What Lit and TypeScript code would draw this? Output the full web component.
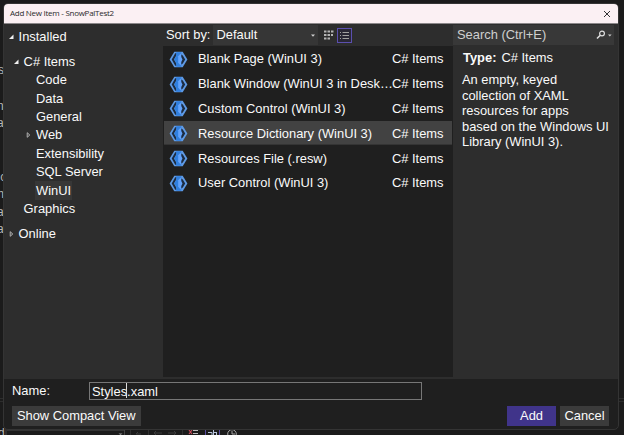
import { LitElement, html, css, svg, nothing } from "lit";
import { customElement, property } from "lit/decorators.js";
import { classMap } from "lit/directives/class-map.js";

interface TreeNode {
  label: string;
  level: number;
  arrow?: "open" | "closed";
  selected?: boolean;
  spaced?: boolean;
}

const TREE: TreeNode[] = [
  { label: "Installed", level: 0, arrow: "open" },
  { label: "C# Items", level: 1, arrow: "open", spaced: true },
  { label: "Code", level: 2 },
  { label: "Data", level: 2 },
  { label: "General", level: 2 },
  { label: "Web", level: 2, arrow: "closed" },
  { label: "Extensibility", level: 2 },
  { label: "SQL Server", level: 2 },
  { label: "WinUI", level: 2, selected: true },
  { label: "Graphics", level: 1 },
  { label: "Online", level: 0, arrow: "closed", spaced: true },
];

const TEMPLATES = [
  "Blank Page (WinUI 3)",
  "Blank Window (WinUI 3 in Desk…",
  "Custom Control (WinUI 3)",
  "Resource Dictionary (WinUI 3)",
  "Resources File (.resw)",
  "User Control (WinUI 3)",
];

@customElement("item-tree")
class ItemTree extends LitElement {
  static styles = css`
    :host { display: block; padding-top: 3.4px; }
    .node { display: flex; align-items: center; height: 18.35px; }
    .spaced { margin-top: 7.2px; }
    .level0 { padding-left: 4px; }
    .level1 { padding-left: 9px; }
    .level2 { padding-left: 21.4px; }
    .arrow { width: 7px; height: 8px; margin-right: 3.6px; flex: none; }
    .label { line-height: 18px; }
    .selected .label { background: #373737; box-shadow: 0 0 0 1px #373737; height: 17px; line-height: 18px; }
  `;

  render() {
    return TREE.map(
      (n) => html`<div class=${classMap({ node: true, [`level${n.level}`]: true, spaced: !!n.spaced, selected: !!n.selected })}>
        <svg class="arrow" viewBox="0 0 7 8">
          ${n.arrow === "open"
            ? svg`<path d="M5.500 1.500V6H1z" fill="#f0f0f0"/>`
            : n.arrow === "closed"
              ? svg`<path d="M2.200 1.700L4.800 4L2.200 6.300z" fill="#444" stroke="#b8b8b8" stroke-width=".9"/>`
              : nothing}
        </svg>
        <span class="label">${n.label}</span>
      </div>`
    );
  }
}

@customElement("template-row")
class TemplateRow extends LitElement {
  @property() name = "";

  static styles = css`
    :host { display: flex; align-items: center; height: 24.8px; padding: 0 8.5px 0 5px; }
    :host([selected]) { background: linear-gradient(#424242, #424242) 0 0 / 100% 23.6px no-repeat; }
    .icon { width: 19px; height: 17px; margin-right: 10px; flex: none; }
    .name { flex: 1; min-width: 0; white-space: nowrap; }
    .kind { white-space: nowrap; }
  `;

  render() {
    return html`
      <svg class="icon" viewBox="0 0 19 17">
        <path d="M5.300.700h8.400l4.700 7.800-4.700 7.800H5.300L.6 8.500z" fill="#5f9ae4"/>
        <path d="M6.200 2.200h1.600L7 5 5 8.500 7 12l.8 2.800H6.200L2.700 8.500z" fill="#1c2c42"/>
        <path d="M7.200 1.200h5v14.600h-5V12L5.200 8.500l2-3.500z" fill="#2f7fdf"/>
        <path d="M11.600 2.500l1.600 6-1.600 6-2.400-2.800V5.300z" fill="#62a2fb"/>
        <path d="M12.300 3.600l1.500.8 2.400 4.100-2.400 4.100-1.500.8v-2.500l1.200-2.400-1.200-2.400z" fill="#1c2c42"/>
      </svg>
      <span class="name">${this.name}</span>
      <span class="kind">C# Items</span>
    `;
  }
}

@customElement("app-root")
class AppRoot extends LitElement {
  static styles = css`
    :host {
      display: block; position: relative; width: 624px; height: 435px; overflow: hidden;
      background: #1b1b1b; color: #fafafa;
      font: 12.9px/18px "Liberation Sans", Arial, sans-serif;
    }
    .behind { position: absolute; color: #b8b8b8; white-space: nowrap; font-size: 12px; }
    .b1 { left: -2px; top: 61px; }
    .b2 { left: -3px; top: 97px; }
    .b3 { left: -3px; top: 114px; }
    .b4 { left: -3px; top: 168px; }
    .b5 { left: -6px; top: 185px; }
    .b6 { left: -9px; top: 203px; }
    .b7 { left: -9px; top: 220px; }
    .b8 { left: -2px; top: 424px; }
    .seam { position: absolute; left: 0; right: 0; top: 398px; height: 4px; border: solid #2d2d2d; border-width: 1px 0; box-sizing: border-box; }
    .toolbar { position: absolute; left: 0; top: 428px; width: 300px; height: 7px; }
    .dialog {
      position: absolute; left: 3px; top: 3px; width: 616px; height: 427px; box-sizing: border-box;
      border: 1px solid #343434; border-radius: 5px; overflow: hidden; background: #1f1f1f;
      display: flex; flex-direction: column;
    }
    .title {
      flex: none; height: 20px; box-sizing: border-box; background: #fbf0f3; color: #2a2a2a;
      border-bottom: 1px solid #8b8789; display: flex; align-items: center;
      justify-content: space-between; padding: 0 7px 0 6px;
      font: 8px/18px "Open Sans", "Noto Sans", sans-serif; letter-spacing: -.27px;
    }
    .title span { padding-bottom: 1px; }
    .close { width: 8px; height: 8px; }
    .body { flex: none; height: 355px; display: grid; grid-template-columns: 159px 290px 1fr; background: #2d2d2d; }
    .middle { display: flex; flex-direction: column; }
    .sort { height: 22px; display: flex; align-items: center; padding-left: 3px; box-sizing: border-box; }
    .combo { margin-left: 3px; width: 105px; height: 20px; background: #363636; display: flex; align-items: center; justify-content: space-between; padding: 0 3px 0 3px; box-sizing: border-box; }
    .caret { width: 4px; height: 3px; }
    .grid { width: 10px; height: 10px; margin-left: 6px; }
    .lines { width: 15px; height: 15px; margin-left: 3px; }
    .list { flex: 1; background: #1f1f1f; padding: 1px 1px 0; margin-bottom: 2px; }
    .side { display: flex; flex-direction: column; }
    .search { height: 20px; margin: 1px 4px 0 0; background: #383838; color: #cfcfcf; display: flex; align-items: center; justify-content: space-between; padding: 0 2px 0 4px; box-sizing: border-box; }
    .glass { width: 16px; height: 12px; }
    .details { padding: 4px 4px 0 9px; }
    .type { margin-left: 1px; }
    .type b { margin-right: 5px; }
    .description { margin-top: 5px; line-height: 15.6px; white-space: nowrap; }
    .name-row { flex: none; display: flex; align-items: center; height: 18px; margin-top: 3px; padding-left: 8px; }
    .name-row .caption { width: 77px; }
    .field { width: 332.500px; height: 18px; box-sizing: border-box; border: 1px solid #777; padding-left: 2px; line-height: 17px; display: flex; }
    .cursor { width: 1px; height: 15px; background: #ddd; margin: 0 0 0 -1px; }
    .actions { flex: none; display: flex; margin-top: 6px; padding: 0 9px 0 8px; gap: 4px; }
    .button { height: 20px; line-height: 20px; background: #3b3b3b; text-align: center; }
    .compact { width: 128.5px; margin-right: auto; }
    .add { width: 49px; background: #40348a; }
    .cancel { width: 49px; }
  `;

  render() {
    return html`
      <span class="behind b1">s</span><span class="behind b2">n</span><span class="behind b3">a</span>
      <span class="behind b4">.c</span><span class="behind b5">m</span><span class="behind b6">ka</span><span class="behind b7">sa</span>
      <div class="seam"></div>
      <span class="behind b8">d</span>
      <svg class="toolbar" viewBox="0 0 300 7">
        <path d="M6 .5V7M124.500 2V7" stroke="#444"/>
        <path d="M7 2.500H124" stroke="#333"/>
        <path d="M118.500 5.500h4l-2 1.500z" fill="#999"/>
        <path d="M136 6h5m-3-2-2 2M154 5h8m-6-2-2 2 2 2M168 5h8m-2-2 2 2-2 2" stroke="#3c3c3c" fill="none"/>
        <path d="M130.500 2V7M148.500 2V7M182.500 2V7" stroke="#303030"/>
        <path d="M189 2l3 4M192 2l-3 4" stroke="#c64b58" stroke-width="1.2"/>
        <path d="M193 2.500h5M193 5.500h5" stroke="#bbb"/>
        <path d="M205.500 7V1.500h14V7" stroke="#584da0" fill="none"/>
        <path d="M208 4.500h4v2.500M213.500 2V7M216.500 5V7M214 4.500h3" stroke="#b7c4dc" fill="none"/>
        <circle cx="232" cy="6" r="4.300" stroke="#a5a5a5" fill="none"/>
        <path d="M232 3V6h3" stroke="#a5a5a5" fill="none"/>
      </svg>
      <div class="dialog">
        <div class="title">
          <span>Add New Item - SnowPalTest2</span>
          <svg class="close" viewBox="0 0 8 8"><path d="M1 1l6 6M7 1L1 7" stroke="#333" stroke-width="1"/></svg>
        </div>
        <div class="body">
          <item-tree></item-tree>
          <div class="middle">
            <div class="sort">
              <span>Sort by:</span>
              <div class="combo">
                <span>Default</span>
                <svg class="caret" viewBox="0 0 4 3"><path d="M0 .5h4L2 2.700z" fill="#d0d0d0"/></svg>
              </div>
              <svg class="grid" viewBox="0 0 10 10">
                <path d="M0 1.500h2.500M3.500 1.500H6M7 1.500h2.500M0 5h2.500M3.500 5H6M7 5h2M0 8.500h2.500M3.500 8.500H6" stroke="#b5b5b5" stroke-width="2"/>
              </svg>
              <svg class="lines" viewBox="0 0 15 15">
                <rect x=".5" y=".5" width="14" height="14" fill="#292735" stroke="#5b4fae"/>
                <path d="M3 4.500h1M5.500 4.500H12M3 7.500h1M5.500 7.500H12M3 10.500h1M5.500 10.500H12" stroke="#a0a0a0"/>
              </svg>
            </div>
            <div class="list">
              ${TEMPLATES.map((name, i) => html`<template-row .name=${name} ?selected=${i === 3}></template-row>`)}
            </div>
          </div>
          <div class="side">
            <div class="search">
              <span>Search (Ctrl+E)</span>
              <svg class="glass" viewBox="0 0 16 12">
                <circle cx="6" cy="4.500" r="2.400" fill="none" stroke="#ddd" stroke-width="1.200"/>
                <path d="M4.300 6.300L1 9.500" stroke="#ddd" stroke-width="1.600"/>
                <path d="M12 5.500h3.600l-1.800 2z" fill="#ccc"/>
              </svg>
            </div>
            <div class="details">
              <div class="type"><b>Type:</b>C# Items</div>
              <div class="description">An empty, keyed<br>collection of XAML<br>resources for apps<br>based on the Windows UI<br>Library (WinUI 3).</div>
            </div>
          </div>
        </div>
        <div class="name-row">
          <span class="caption">Name:</span>
          <div class="field"><span>Styles</span><span class="cursor"></span><span>.xaml</span></div>
        </div>
        <div class="actions">
          <div class="button compact">Show Compact View</div>
          <div class="button add">Add</div>
          <div class="button cancel">Cancel</div>
        </div>
      </div>
    `;
  }
}
